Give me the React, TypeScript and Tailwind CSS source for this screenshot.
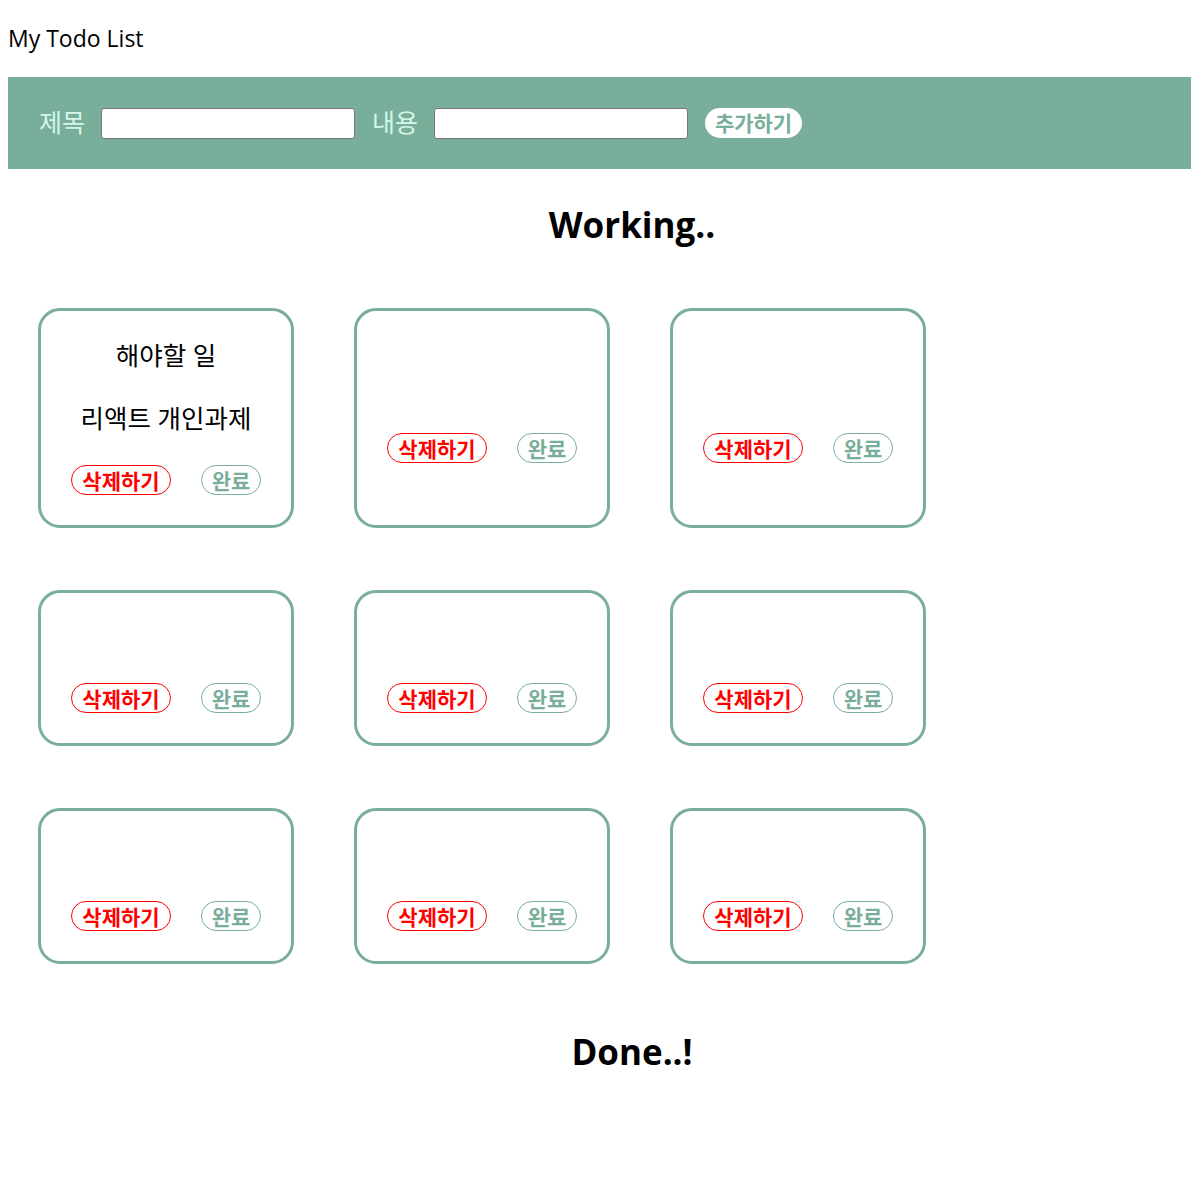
import React, { useState } from 'react'

interface Todo {
  id: number
  title: string
  body: string
  isDone: boolean
}

const font = "font-['Open_Sans','Noto_Sans_CJK_KR',sans-serif]"

function TodoCard({ todo }: { todo: Todo }) {
  return (
    <div className="w-[256px] rounded-[22px] border-[3px] border-[#79ae9b] pt-7 pb-[30px] flex flex-col items-center justify-center">
      <div className="text-[25.5px] leading-8 text-black">{todo.title}</div>
      <div className="mt-[31px] text-[25.5px] leading-8 text-black">{todo.body}</div>
      <div className="mt-[31px] flex items-center gap-[30px]">
        <button className="h-[30px] w-[100px] rounded-full border border-[#ff0000] bg-white text-[21px] font-bold text-[#ff0000]">
          삭제하기
        </button>
        <button className="h-[30px] w-[60px] rounded-full border border-[#79ae9b] bg-white text-[21px] font-bold text-[#79ae9b]">
          완료
        </button>
      </div>
    </div>
  )
}

export default function App() {
  const [title, setTitle] = useState('')
  const [body, setBody] = useState('')
  const [todos] = useState<Todo[]>([
    { id: 1, title: '해야할 일', body: '리액트 개인과제', isDone: false },
    ...Array.from({ length: 8 }, (_, i) => ({ id: i + 2, title: '', body: '', isDone: false }))
  ])

  return (
    <div className={`${font} min-h-[1189px] bg-white pl-2`}>
      <div className="h-[77px] flex items-center text-[23px] text-black">My Todo List</div>
      <div className="h-[92px] bg-[#79ae9b] flex items-center pl-[31px]">
        <label className="text-[25px] text-[#d2f7ea]">제목</label>
        <input
          value={title}
          onChange={(e) => setTitle(e.target.value)}
          className="ml-4 h-[31px] w-[254px] rounded-[3px] border border-[#767676] bg-white"
        />
        <label className="ml-[17px] text-[25px] text-[#d2f7ea]">내용</label>
        <input
          value={body}
          onChange={(e) => setBody(e.target.value)}
          className="ml-4 h-[31px] w-[254px] rounded-[3px] border border-[#767676] bg-white"
        />
        <button className="ml-[17px] h-[30px] w-[97px] rounded-full bg-white text-[21px] font-bold text-[#79ae9b]">
          추가하기
        </button>
      </div>
      <h2 className="mt-[36px] pl-[65px] text-center text-[35px] font-bold leading-[40px] text-black">Working..</h2>
      <div className="mt-[63px] ml-[30px] grid grid-cols-[repeat(3,256px)] gap-x-[60px] gap-y-[62px]">
        {todos.map((t) => (
          <TodoCard key={t.id} todo={t} />
        ))}
      </div>
      <h2 className="mt-[68px] pl-[65px] text-center text-[35px] font-bold leading-[40px] text-black">Done..!</h2>
    </div>
  )
}
